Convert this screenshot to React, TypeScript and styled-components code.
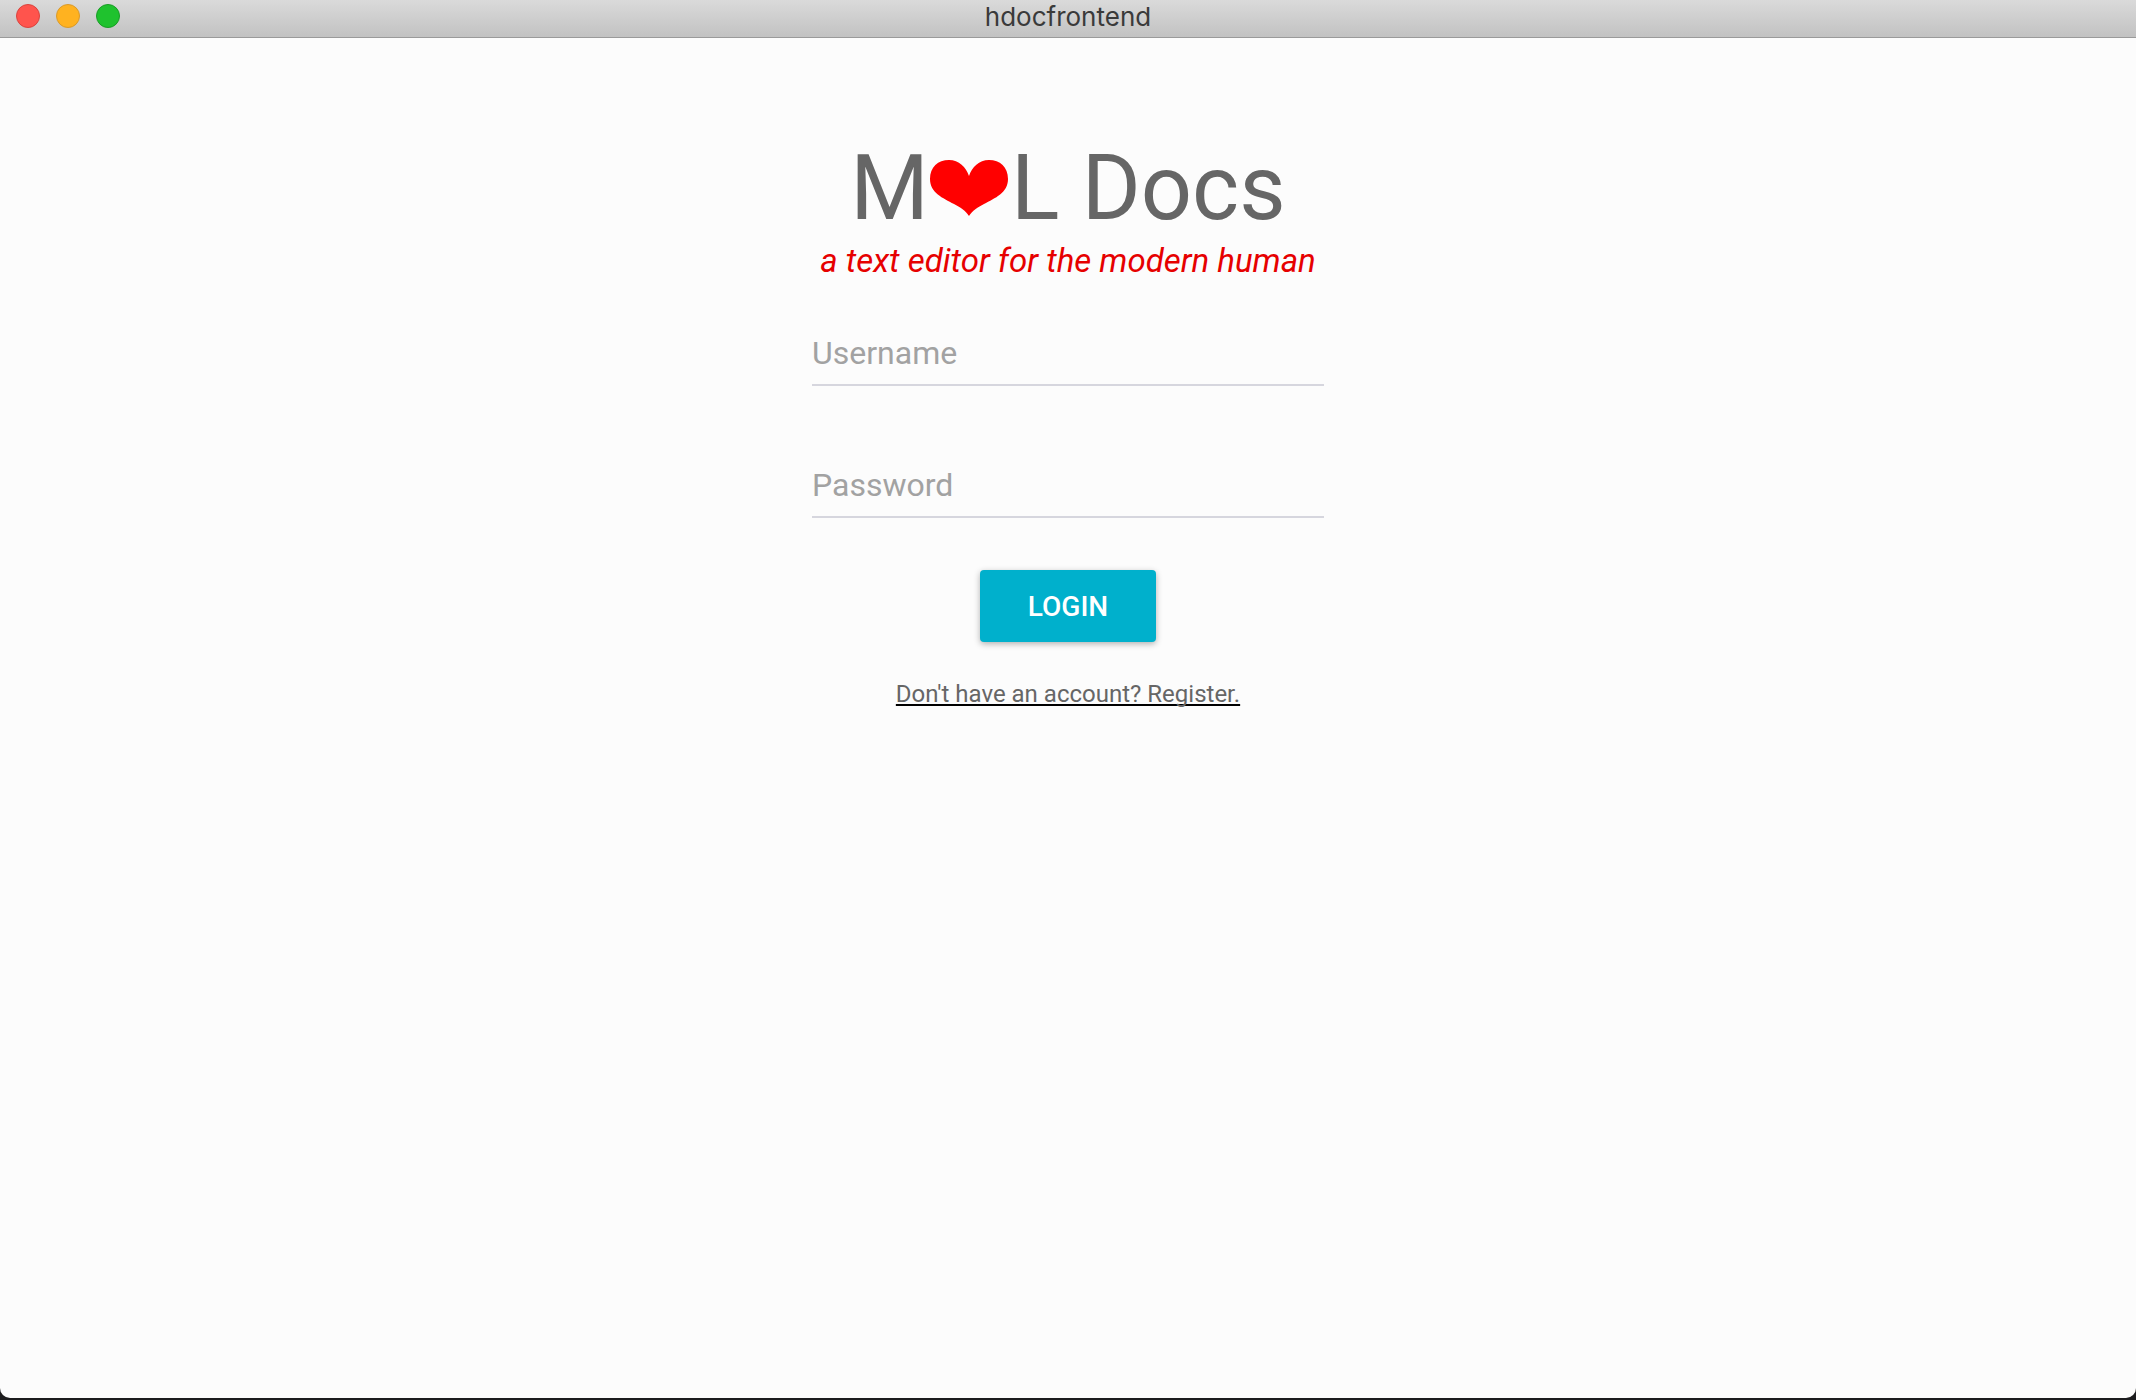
import React, { useState } from "react";
import styled, { createGlobalStyle } from "styled-components";

const GlobalStyle = createGlobalStyle`
  * { box-sizing: border-box; }
  body {
    margin: 0;
    background: #1c1c1e;
    font-family: Roboto, "Liberation Sans", sans-serif;
  }
`;

const Desktop = styled.div`
  display: flex;
  min-height: 100vh;
  padding-bottom: 2px;
`;

const Window = styled.div`
  flex: 1;
  display: flex;
  flex-direction: column;
  background: #fcfcfc;
  border-radius: 0 0 10px 10px;
  overflow: hidden;
`;

const TitleBar = styled.header`
  display: grid;
  grid-template-columns: 1fr auto 1fr;
  align-items: center;
  height: 38px;
  padding: 0 16px 5px;
  background: linear-gradient(#dadada, #c2c2c2);
  border-bottom: 1px solid #9a9a9a;
`;

const WindowControls = styled.div`
  display: flex;
  gap: 16px;
`;

const ControlDot = styled.button<{ $fill: string; $edge: string }>`
  width: 24px;
  height: 24px;
  padding: 0;
  border: 1px solid ${(p) => p.$edge};
  border-radius: 50%;
  background: ${(p) => p.$fill};
`;

const WindowTitle = styled.span`
  padding-top: 2px;
  font-family: Inter, "Liberation Sans", sans-serif;
  font-size: 26px;
  line-height: 30px;
  color: #3a3a3a;
`;

const Page = styled.main`
  display: flex;
  flex-direction: column;
  align-items: center;
  padding: 98px 24px;
`;

const Brand = styled.h1`
  display: flex;
  align-items: baseline;
  margin: 0;
  font-size: 90px;
  font-weight: 400;
  line-height: 106px;
  color: #666666;
  white-space: pre;
`;

const Heart = styled.svg`
  width: 82px;
  height: 60px;
`;

const Tagline = styled.p`
  margin: 0;
  font-size: 33px;
  font-style: italic;
  line-height: 38px;
  color: #e60000;
`;

const LoginForm = styled.form`
  display: flex;
  flex-direction: column;
  align-items: center;
  width: 100%;
  max-width: 512px;
  margin-top: 52px;
`;

const Fields = styled.div`
  display: grid;
  gap: 78px;
  width: 100%;
`;

const TextField = styled.input`
  width: 100%;
  height: 54px;
  padding: 0 0 10px;
  border: 0;
  border-bottom: 2px solid #d6d6de;
  border-radius: 0;
  outline: 0;
  background: transparent;
  font: 400 32px/38px Roboto, "Liberation Sans", sans-serif;
  color: #616161;

  &::placeholder {
    color: #a2a2a2;
    opacity: 1;
  }
`;

const LoginButton = styled.button`
  height: 72px;
  margin-top: 52px;
  padding: 2px 48px 0;
  border: 0;
  border-radius: 4px;
  background: #00b0cc;
  box-shadow: 0 2px 6px rgba(0, 0, 0, 0.3);
  font: 500 28px/32px Roboto, "Liberation Sans", sans-serif;
  color: #ffffff;
  cursor: pointer;
`;

const RegisterLink = styled.a`
  margin-top: 38px;
  font-size: 24px;
  line-height: 28px;
  color: #666666;
  text-decoration: underline;
  text-decoration-color: #000000;
  text-decoration-thickness: 2px;
  text-decoration-skip-ink: none;
  text-underline-offset: 2px;
`;

const controls = [
  { name: "Close", fill: "#ff544d", edge: "#d9443e" },
  { name: "Minimize", fill: "#ffb220", edge: "#d99a2b" },
  { name: "Zoom", fill: "#1fc22e", edge: "#1a9c26" },
];

export default function App() {
  const [username, setUsername] = useState("");
  const [password, setPassword] = useState("");

  return (
    <>
      <GlobalStyle />
      <Desktop>
        <Window>
          <TitleBar>
            <WindowControls>
              {controls.map((c) => (
                <ControlDot key={c.name} type="button" aria-label={c.name} $fill={c.fill} $edge={c.edge} />
              ))}
            </WindowControls>
            <WindowTitle>hdocfrontend</WindowTitle>
          </TitleBar>
          <Page>
            <Brand>
              <span>M</span>
              <Heart viewBox="1 0 82 60" aria-hidden="true">
                <path
                  fill="#ff0000"
                  d="M41 57 C38 52 32 48 26 45 C15 39 2 34 2 20 C2 8 10 1 21 1 C31 1 38 8 41 17 C44 8 51 1 61 1 C72 1 80 8 80 20 C80 34 67 39 56 45 C50 48 44 52 41 57 Z"
                />
              </Heart>
              <span>L Docs</span>
            </Brand>
            <Tagline>a text editor for the modern human</Tagline>
            <LoginForm onSubmit={(e) => e.preventDefault()}>
              <Fields>
                <TextField
                  aria-label="Username"
                  placeholder="Username"
                  value={username}
                  onChange={(e) => setUsername(e.target.value)}
                />
                <TextField
                  type="password"
                  aria-label="Password"
                  placeholder="Password"
                  value={password}
                  onChange={(e) => setPassword(e.target.value)}
                />
              </Fields>
              <LoginButton type="submit">LOGIN</LoginButton>
              <RegisterLink href="#register">Don't have an account? Register.</RegisterLink>
            </LoginForm>
          </Page>
        </Window>
      </Desktop>
    </>
  );
}
